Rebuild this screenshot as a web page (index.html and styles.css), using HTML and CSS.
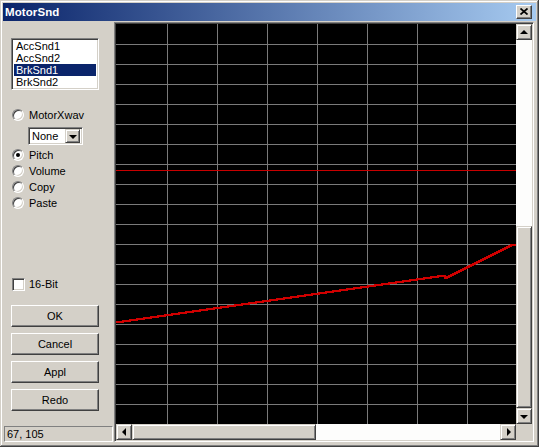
FILE: index.html
```html
<!DOCTYPE html>
<html>
<head>
<meta charset="utf-8">
<link rel="stylesheet" href="styles.css">
</head>
<body>
<div class="window">
  <div class="titlebar">
    <span class="title">MotorSnd</span>
    <span class="close">
      <svg width="8" height="7" viewBox="0 0 8 7"><path d="M0.5 0.5 L7.5 6.5 M7.5 0.5 L0.5 6.5" stroke="#000" stroke-width="1.7" fill="none"/></svg>
    </span>
  </div>
  <div class="content">
    <div class="side">
      <div class="listbox">
        <div class="item">AccSnd1</div>
        <div class="item">AccSnd2</div>
        <div class="item selected">BrkSnd1</div>
        <div class="item">BrkSnd2</div>
      </div>
      <div class="opt opt-first"><span class="radio"></span><span>MotorXwav</span></div>
      <div class="combo"><span class="combo-text">None</span><span class="combo-btn"><span class="tri-down"></span></span></div>
      <div class="opt opt-pitch"><span class="radio on"></span><span>Pitch</span></div>
      <div class="opt"><span class="radio"></span><span>Volume</span></div>
      <div class="opt"><span class="radio"></span><span>Copy</span></div>
      <div class="opt"><span class="radio"></span><span>Paste</span></div>
      <div class="opt opt-check"><span class="check"></span><span>16-Bit</span></div>
      <div class="buttons">
        <div class="btn">OK</div>
        <div class="btn">Cancel</div>
        <div class="btn">Appl</div>
        <div class="btn">Redo</div>
      </div>
      <div class="status">67, 105</div>
    </div>
    <div class="frame">
      <svg class="graph" width="400" height="400" viewBox="0 0 400 400" shape-rendering="crispEdges">
        <rect width="400" height="400" fill="#000"/>
        <path d="M51.5 0V400M101.5 0V400M151.5 0V400M201.5 0V400M251.5 0V400M301.5 0V400M351.5 0V400" stroke="#7a7a7a" stroke-width="1"/>
        <path d="M0 20.5H400M0 40.5H400M0 60.5H400M0 80.5H400M0 100.5H400M0 120.5H400M0 140.5H400M0 160.5H400M0 180.5H400M0 200.5H400M0 220.5H400M0 240.5H400M0 260.5H400M0 280.5H400M0 300.5H400M0 320.5H400M0 340.5H400M0 360.5H400M0 380.5H400" stroke="#7a7a7a" stroke-width="1"/>
        <path d="M0 146.5H400" stroke="#c80000" stroke-width="1"/>
        <path fill="none" stroke="#d00000" stroke-width="2" d="M0 298
          h7v-1h7v-1h7v-1h7v-1h7v-1h7v-1h7v-1h7v-1h7v-1h7v-1
          h7v-1h7v-1h7v-1h7v-1h7v-1h7v-1h7v-1h7v-1h7v-1h7v-1
          h7v-1h7v-1h7v-1h7v-1h7v-1h7v-1h7v-1h7v-1h7v-1h7v-1
          h7v-1h7v-1h7v-1h7v-1h7v-1h7v-1h7v-1h7v-1h7v-1h7v-1
          h7v-1h7v-1h7v-1h7v-1h7v-1h7v-1
          h7v2
          h2v-1h2v-1h2v-1h2v-1h2v-1h2v-1h2v-1h2v-1h2v-1h2v-1
          h2v-1h2v-1h2v-1h2v-1h2v-1h2v-1h2v-1h2v-1h2v-1h2v-1
          h2v-1h2v-1h2v-1h2v-1h2v-1h2v-1h2v-1h2v-1h2v-1h2v-1
          h2v-1h2v-1h2v-1h5"/>
      </svg>
      <div class="vscroll">
        <div class="sbtn"><span class="tri-up"></span></div>
        <div class="track vtrack"></div>
        <div class="thumb vthumb"></div>
        <div class="sbtn"><span class="tri-down"></span></div>
      </div>
      <div class="hscroll">
        <div class="sbtn"><span class="tri-left"></span></div>
        <div class="thumb hthumb"></div>
        <div class="track htrack"></div>
        <div class="sbtn"><span class="tri-right"></span></div>
      </div>
      <div class="corner"></div>
    </div>
  </div>
</div>
</body>
</html>
```
FILE: styles.css
```css
* { box-sizing: border-box; }
html, body { margin: 0; padding: 0; }
body {
  width: 539px;
  height: 447px;
  background: #d4d0c8;
  font-family: "Liberation Sans", Arial, sans-serif;
  font-size: 11px;
  color: #000;
  overflow: hidden;
}
.window {
  width: 539px;
  height: 447px;
  padding: 3px;
  background: #d4d0c8;
  box-shadow: inset -1px -1px #404040, inset 1px 1px #d4d0c8, inset -2px -2px #808080, inset 2px 2px #fff;
  display: flex;
  flex-direction: column;
}
.titlebar {
  height: 18px;
  flex: none;
  background: linear-gradient(to right, #0a246a, #a6caf0);
  display: flex;
  align-items: center;
  justify-content: space-between;
  padding: 0 4px 0 2px;
}
.title {
  color: #fff;
  font-weight: bold;
  font-size: 11.5px;
  letter-spacing: 0.1px;
}
.close {
  width: 16px;
  height: 14px;
  background: #d4d0c8;
  border-top: 1px solid #fff;
  border-left: 1px solid #fff;
  border-right: 1px solid #404040;
  border-bottom: 1px solid #404040;
  box-shadow: inset -1px -1px #808080;
  display: flex;
  align-items: center;
  justify-content: center;
  padding-bottom: 1px;
}
.close svg { display: block; }
.content {
  flex: 1;
  display: flex;
}
.side {
  width: 111px;
  flex: none;
  display: flex;
  flex-direction: column;
}
.listbox {
  margin: 17px 0 0 8px;
  width: 88px;
  height: 52px;
  background: #fff;
  border-top: 1px solid #808080;
  border-left: 1px solid #808080;
  border-right: 1px solid #fff;
  border-bottom: 1px solid #fff;
  box-shadow: inset 1px 1px #404040, inset -1px -1px #d4d0c8;
  padding: 1px 2px;
}
.item {
  height: 12px;
  line-height: 12px;
  padding-left: 2px;
  white-space: nowrap;
}
.item.selected {
  background: #0a246a;
  color: #fff;
}
.opt {
  height: 16px;
  display: flex;
  align-items: center;
  margin-left: 9px;
  gap: 5px;
}
.opt-first { margin-top: 17px; }
.opt-pitch { margin-top: 2px; }
.opt-check { margin-top: 65px; gap: 4px; }
.radio {
  width: 12px;
  height: 12px;
  border-radius: 50%;
  background: #fff;
  border: 1px solid;
  border-color: #808080 #fff #fff #808080;
  box-shadow: inset 1px 1px #404040, inset -1px -1px #d4d0c8;
  position: relative;
  flex: none;
}
.radio.on::after {
  content: "";
  position: absolute;
  left: 3px;
  top: 3px;
  width: 4px;
  height: 4px;
  border-radius: 50%;
  background: #000;
}
.check {
  width: 13px;
  height: 13px;
  background: #fff;
  border: 1px solid;
  border-color: #808080 #fff #fff #808080;
  box-shadow: inset 1px 1px #404040, inset -1px -1px #d4d0c8;
  flex: none;
}
.combo {
  margin: 4px 0 0 25px;
  width: 55px;
  height: 18px;
  background: #fff;
  border: 1px solid;
  border-color: #808080 #fff #fff #808080;
  box-shadow: inset 1px 1px #404040, inset -1px -1px #d4d0c8;
  padding: 2px;
  display: flex;
  align-items: center;
  justify-content: space-between;
}
.combo-text { padding-left: 1px; line-height: 12px; }
.combo-btn {
  width: 15px;
  height: 14px;
  background: #d4d0c8;
  border: 1px solid;
  border-color: #d4d0c8 #404040 #404040 #d4d0c8;
  box-shadow: inset 1px 1px #fff, inset -1px -1px #808080;
  display: flex;
  align-items: center;
  justify-content: center;
}
.buttons {
  margin: 13px 0 0 8px;
  display: flex;
  flex-direction: column;
  gap: 6px;
}
.btn {
  width: 88px;
  height: 22px;
  background: #d4d0c8;
  border: 1px solid;
  border-color: #fff #404040 #404040 #fff;
  box-shadow: inset -1px -1px #808080;
  display: flex;
  align-items: center;
  justify-content: center;
  padding-bottom: 1px;
}
.status {
  margin: 15px 0 0 1px;
  width: 109px;
  height: 16px;
  border: 1px solid;
  border-color: #808080 #fff #fff #808080;
  padding-left: 2px;
  line-height: 14px;
}
.frame {
  margin-top: 1px;
  width: 420px;
  height: 420px;
  border: 1px solid;
  border-color: #808080 #fff #fff #808080;
  box-shadow: inset 1px 1px #404040, inset -1px -1px #d4d0c8;
  padding: 1px;
  display: grid;
  grid-template-columns: 400px 16px;
  grid-template-rows: 400px 16px;
}
.graph { display: block; }
.vscroll {
  display: flex;
  flex-direction: column;
}
.hscroll {
  display: flex;
}
.sbtn {
  width: 16px;
  height: 16px;
  flex: none;
  background: #d4d0c8;
  border: 1px solid;
  border-color: #d4d0c8 #404040 #404040 #d4d0c8;
  box-shadow: inset 1px 1px #fff, inset -1px -1px #808080;
  display: flex;
  align-items: center;
  justify-content: center;
}
.track { background: #fdfdfc; }
.vtrack { height: 186px; }
.htrack { width: 184px; }
.thumb {
  background: #d4d0c8;
  border: 1px solid;
  border-color: #d4d0c8 #404040 #404040 #d4d0c8;
  box-shadow: inset 1px 1px #fff, inset -1px -1px #808080;
}
.vthumb { height: 182px; }
.hthumb { width: 184px; }
.corner { background: #d4d0c8; }
.tri-up, .tri-down, .tri-left, .tri-right { width: 0; height: 0; display: block; }
.tri-up { border-left: 4px solid transparent; border-right: 4px solid transparent; border-bottom: 4px solid #000; margin-bottom: 1px; }
.tri-down { border-left: 4px solid transparent; border-right: 4px solid transparent; border-top: 4px solid #000; margin-top: 1px; }
.tri-left { border-top: 4px solid transparent; border-bottom: 4px solid transparent; border-right: 4px solid #000; margin-right: 1px; }
.tri-right { border-top: 4px solid transparent; border-bottom: 4px solid transparent; border-left: 4px solid #000; margin-left: 1px; }
```
